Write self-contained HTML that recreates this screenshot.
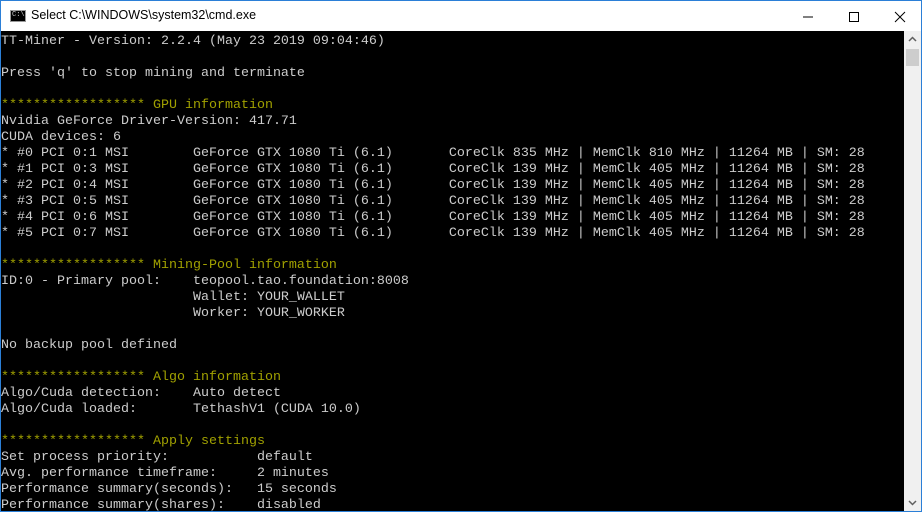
<!DOCTYPE html><html><head><style>
body{margin:0;width:922px;height:512px;overflow:hidden;background:#fff;position:relative;font-family:"Liberation Sans",sans-serif}
.win{position:absolute;left:0;top:0;width:920px;height:510px;border:1px solid #2b7fd7}
.title{position:absolute;left:0;top:0;width:920px;height:30px;background:#fff}
.ico{position:absolute;left:9px;top:9px;width:14px;height:10px;background:#000;border:1px solid #999}
.ico span{position:absolute;left:1px;top:0;color:#ccc;font:7px "Liberation Mono",monospace}
.tt{position:absolute;left:30px;top:7px;font-size:12.5px;color:#000}
.con{position:absolute;left:0;top:30px;width:903px;height:480px;background:#000}
pre{position:absolute;left:0;top:3px;margin:0;font:13.33px/16px "Liberation Mono",monospace;color:#cccccc}
.y{color:#a0a000}
.sb{position:absolute;left:903px;top:30px;width:17px;height:480px;background:#f0f0f0}
.th{position:absolute;left:2px;top:18px;width:13px;height:17px;background:#cdcdcd}
</style></head><body><div class="win">
<div class="title"><div class="ico"><span>C:\</span></div><div class="tt">Select C:\WINDOWS\system32\cmd.exe</div>
<svg style="position:absolute;left:790px;top:8px" width="120" height="16"><line x1="12" y1="8" x2="22" y2="8" stroke="#000"/><rect x="58.5" y="3.5" width="9" height="9" fill="none" stroke="#000"/><path d="M104 3l10 10M114 3l-10 10" stroke="#000"/></svg></div>
<div class="con"><pre>TT-Miner - Version: 2.2.4 (May 23 2019 09:04:46)

Press 'q' to stop mining and terminate

<span class="y">****************** GPU information</span>
Nvidia GeForce Driver-Version: 417.71
CUDA devices: 6
* #0 PCI 0:1 MSI        GeForce GTX 1080 Ti (6.1)       CoreClk 835 MHz | MemClk 810 MHz | 11264 MB | SM: 28
* #1 PCI 0:3 MSI        GeForce GTX 1080 Ti (6.1)       CoreClk 139 MHz | MemClk 405 MHz | 11264 MB | SM: 28
* #2 PCI 0:4 MSI        GeForce GTX 1080 Ti (6.1)       CoreClk 139 MHz | MemClk 405 MHz | 11264 MB | SM: 28
* #3 PCI 0:5 MSI        GeForce GTX 1080 Ti (6.1)       CoreClk 139 MHz | MemClk 405 MHz | 11264 MB | SM: 28
* #4 PCI 0:6 MSI        GeForce GTX 1080 Ti (6.1)       CoreClk 139 MHz | MemClk 405 MHz | 11264 MB | SM: 28
* #5 PCI 0:7 MSI        GeForce GTX 1080 Ti (6.1)       CoreClk 139 MHz | MemClk 405 MHz | 11264 MB | SM: 28

<span class="y">****************** Mining-Pool information</span>
ID:0 - Primary pool:    teopool.tao.foundation:8008
                        Wallet: YOUR_WALLET
                        Worker: YOUR_WORKER

No backup pool defined

<span class="y">****************** Algo information</span>
Algo/Cuda detection:    Auto detect
Algo/Cuda loaded:       TethashV1 (CUDA 10.0)

<span class="y">****************** Apply settings</span>
Set process priority:           default
Avg. performance timeframe:     2 minutes
Performance summary(seconds):   15 seconds
Performance summary(shares):    disabled</pre></div>
<div class="sb"><div class="th"></div>
<svg style="position:absolute;left:4px;top:5px" width="9" height="6"><path d="M1 5l3.5-3.5L8 5" stroke="#606060" stroke-width="1.5" fill="none"/></svg>
<svg style="position:absolute;left:4px;top:469px" width="9" height="6"><path d="M1 1l3.5 3.5L8 1" stroke="#606060" stroke-width="1.5" fill="none"/></svg></div>
</div></body></html>
